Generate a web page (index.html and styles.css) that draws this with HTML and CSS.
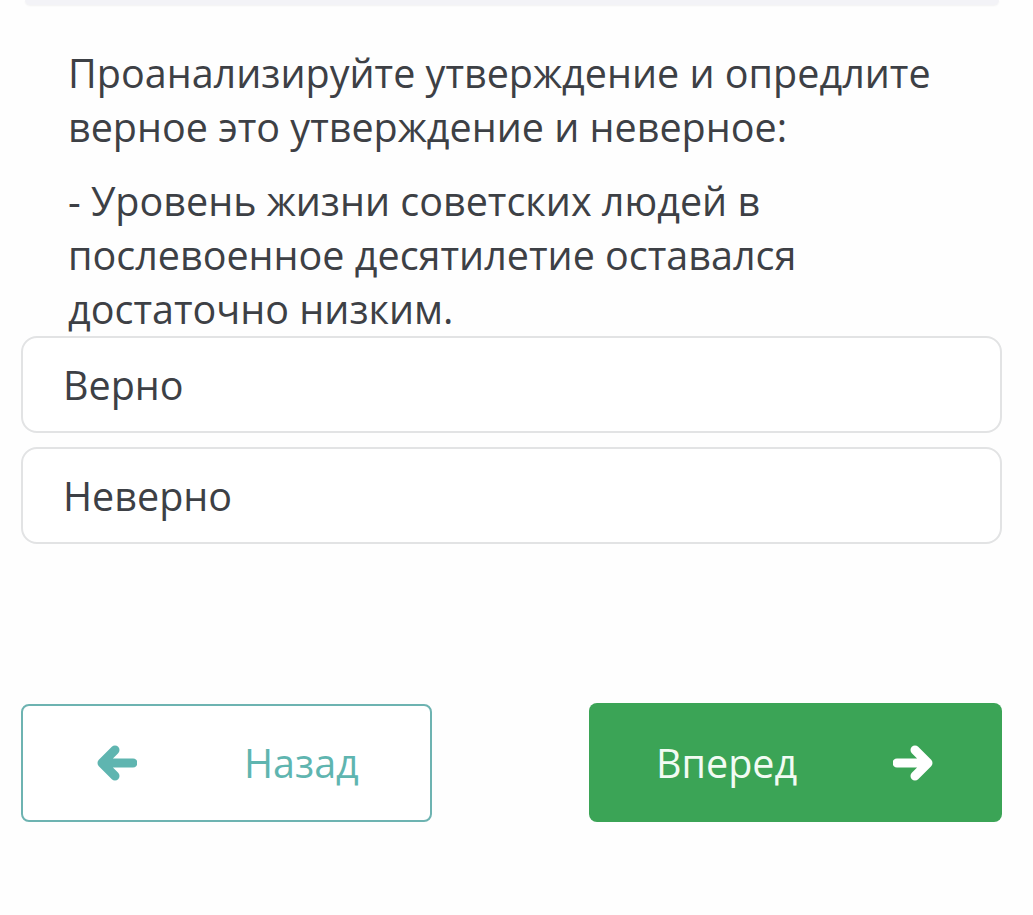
FILE: index.html
```html
<!DOCTYPE html>
<html lang="ru">
<head>
<meta charset="utf-8">
<link rel="stylesheet" href="styles.css">
</head>
<body>
<div class="page">
  <div class="card-edge"></div>
  <div class="question">
    <p class="q-line">Проанализируйте утверждение и опредлите верное это утверждение и неверное:</p>
    <p class="q-line q-second">- Уровень жизни советских людей в послевоенное десятилетие оставался достаточно низким.</p>
  </div>
  <div class="options">
    <div class="option">Верно</div>
    <div class="option">Неверно</div>
  </div>
  <div class="nav">
    <button class="btn btn-back">
      <svg class="arrow" width="40" height="36" viewBox="0 0 40 36"><path d="M36 18H6M18 5L5 18L18 31" fill="none" stroke="currentColor" stroke-width="9" stroke-linecap="round" stroke-linejoin="round"/></svg>
      <span class="btn-label">Назад</span>
    </button>
    <button class="btn btn-next">
      <span class="btn-label">Вперед</span>
      <svg class="arrow" width="40" height="36" viewBox="0 0 40 36"><path d="M4 18H34M22 5L35 18L22 31" fill="none" stroke="currentColor" stroke-width="9" stroke-linecap="round" stroke-linejoin="round"/></svg>
    </button>
  </div>
</div>
</body>
</html>
```

FILE: styles.css
```css
html, body {
  margin: 0;
  padding: 0;
  background: #fefefe;
}
.page {
  width: 1033px;
  height: 915px;
  font-family: "Open Sans", "Noto Sans", sans-serif;
  color: #3d4045;
  box-sizing: border-box;
}
.card-edge {
  height: 5px;
  margin: 0 34px 0 25px;
  background: #f3f3f7;
  border-radius: 0 0 10px 10px;
  box-shadow: 0 1px 2px rgba(0,0,0,0.05);
}
.question {
  padding: 41px 40px 0 68px;
}
.q-line {
  margin: 0;
  font-size: 39.5px;
  line-height: 54px;
}
.q-second {
  margin-top: 20px;
}
.options {
  display: flex;
  flex-direction: column;
  gap: 14px;
  margin: 0 31px 0 21px;
}
.option {
  border: 2px solid #e2e3e4;
  border-radius: 16px;
  box-sizing: border-box;
  height: 97px;
  display: flex;
  align-items: center;
  padding-left: 40px;
  font-size: 39.5px;
  color: #3d4045;
  background: #fff;
}
.nav {
  display: flex;
  justify-content: space-between;
  margin: 160px 31px 0 21px;
}
.btn {
  width: 411px;
  height: 118px;
  box-sizing: border-box;
  border-radius: 8px;
  font-family: "Open Sans", "Noto Sans", sans-serif;
  font-size: 39.5px;
  display: flex;
  align-items: center;
  padding: 0;
}
.btn-back {
  background: #fff;
  border: 2px solid #6db3b1;
  color: #5fb5b0;
  padding-left: 74px;
}
.btn-back .btn-label {
  margin-left: 107px;
}
.btn-next {
  background: #3ba456;
  border: none;
  color: #f2fbf3;
  padding-left: 67px;
  margin-top: -1px;
  height: 119px;
  width: 413px;
}
.btn-next .btn-label {
  margin-right: 96px;
}
.btn-next .arrow {
  color: #ffffff;
}
```
